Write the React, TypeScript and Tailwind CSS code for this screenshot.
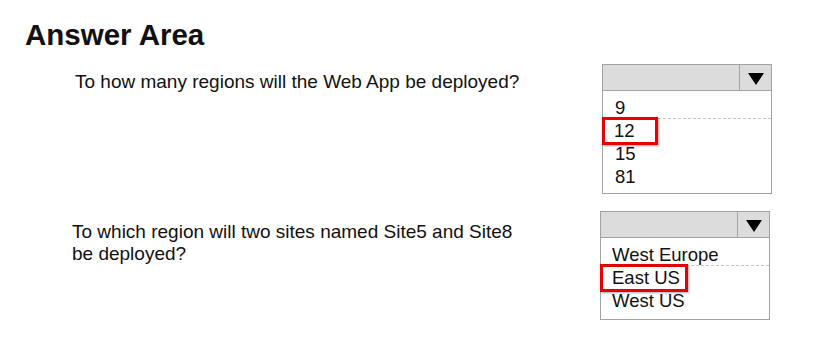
import React from "react";

type Option = { label: string; selected?: boolean };

interface DropdownProps {
  options: Option[];
  padLeft: string;
  selectedWidth: string;
  bottomPad: string;
}

function Dropdown({ options, padLeft, selectedWidth, bottomPad }: DropdownProps) {
  return (
    <div className="w-[170px] shrink-0 border border-[#a3a3a3] bg-white">
      {/* header with the arrow cell */}
      <div className="flex h-[26px] bg-[#dcdcdc] border-b border-[#a3a3a3]">
        <div className="flex-1" />
        <div className="w-[32px] border-l border-[#a3a3a3] flex items-center justify-center pt-[2px]">
          <svg width="16" height="12" viewBox="0 0 16 12">
            <polygon points="0,0 16,0 8,12" fill="#000" />
          </svg>
        </div>
      </div>
      <div className={`pt-[5px] ${bottomPad}`}>
        {options.map((o, idx) => (
          <div
            key={idx}
            className={`h-[23px] flex items-center text-[18.5px] leading-[23px] text-[#111] ${
              idx === 0 ? "border-b border-dashed border-[#c4c4c4]" : ""
            } ${o.selected ? "" : padLeft}`}
          >
            {o.selected ? (
              <div
                className={`h-[28px] ${selectedWidth} -ml-px border-[3px] border-[#e60000] flex items-center pl-[9px] shadow-[1px_1px_2px_rgba(0,0,0,0.35)] bg-white`}
              >
                {o.label}
              </div>
            ) : (
              o.label
            )}
          </div>
        ))}
      </div>
    </div>
  );
}

export default function App() {
  return (
    <div
      className="w-[840px] h-[362px] bg-white overflow-hidden text-[#111]"
      style={{ fontFamily: '"Liberation Sans", Arial, sans-serif' }}
    >
      <h1 className="mt-[19px] ml-[25px] text-[29.5px] leading-[32px] font-bold">Answer Area</h1>

      {/* question 1 */}
      <div className="flex items-start mt-[13px] pl-[75px]">
        <p className="w-[527px] shrink-0 mt-[7px] text-[19px] leading-[22px]">
          To how many regions will the Web App be deployed?
        </p>
        <Dropdown
          padLeft="pl-[12px]"
          selectedWidth="w-[56px]"
          bottomPad="pb-[5px]"
          options={[{ label: "9" }, { label: "12", selected: true }, { label: "15" }, { label: "81" }]}
        />
      </div>

      {/* question 2 */}
      <div className="flex items-start mt-[17px] pl-[72px]">
        <p className="w-[528px] shrink-0 mt-[10px] text-[19px] leading-[22px]">
          To which region will two sites named Site5 and Site8
          <br />
          be deployed?
        </p>
        <Dropdown
          padLeft="pl-[11px]"
          selectedWidth="w-[88px]"
          bottomPad="pb-[7px]"
          options={[{ label: "West Europe" }, { label: "East US", selected: true }, { label: "West US" }]}
        />
      </div>
    </div>
  );
}
